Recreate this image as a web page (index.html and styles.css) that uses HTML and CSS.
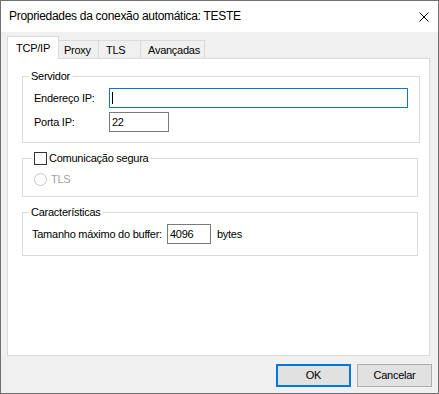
FILE: index.html
```html
<!DOCTYPE html>
<html lang="pt">
<head>
    <meta charset="UTF-8">
    <title>Propriedades da conexão automática: TESTE</title>
    <link rel="stylesheet" href="styles.css">
</head>
<body>
    <div class="window">
        <div class="titlebar">
            <span class="title">Propriedades da conexão automática: TESTE</span>
            <svg class="close" width="10" height="10" viewBox="0 0 10 10">
                <path d="M0.5 0.5 L9.5 9.5 M9.5 0.5 L0.5 9.5" stroke="#000" stroke-width="1" fill="none"/>
            </svg>
        </div>

        <div class="content">
            <div class="tabs">
                <div class="tab active tab-tcp">TCP/IP</div>
                <div class="tab tab-proxy">Proxy</div>
                <div class="tab tab-tls">TLS</div>
                <div class="tab tab-adv">Avançadas</div>
            </div>

            <div class="panel">
                <fieldset class="group group-server">
                    <legend>Servidor</legend>
                    <div class="form-grid">
                        <label>Endereço IP:</label>
                        <div class="textbox focused address"><span class="caret"></span></div>
                        <label>Porta IP:</label>
                        <input class="textbox port" value="22">
                    </div>
                </fieldset>

                <fieldset class="group group-secure">
                    <legend class="check-legend">
                        <input type="checkbox" class="checkbox" id="secure">
                        <label for="secure">Comunicação segura</label>
                    </legend>
                    <div class="radio-row">
                        <input type="radio" class="radio" id="tls" disabled>
                        <label for="tls">TLS</label>
                    </div>
                </fieldset>

                <fieldset class="group group-features">
                    <legend>Características</legend>
                    <div class="buffer-row">
                        <label>Tamanho máximo do buffer:</label>
                        <input class="textbox buffer" value="4096">
                        <span>bytes</span>
                    </div>
                </fieldset>
            </div>

            <div class="buttons">
                <button class="btn default">OK</button>
                <button class="btn">Cancelar</button>
            </div>
        </div>
    </div>
</body>
</html>
```

FILE: styles.css
```css
:root {
    --window-border: #707070;
    --face: #f0f0f0;
    --line: #dadada;
    --field-border: #7a7a7a;
    --accent: #0078d7;
    --disabled: #a0a0a0;
}

body {
    margin: 0;
    font-family: "Liberation Sans", Arial, sans-serif;
    font-size: 11px;
    line-height: 13px;
    letter-spacing: -0.25px;
    color: #000;
}

.window {
    width: 439px;
    height: 394px;
    box-sizing: border-box;
    border: 1px solid var(--window-border);
    background-color: var(--face);
    display: flex;
    flex-direction: column;
}

.titlebar {
    height: 31px;
    background-color: #fff;
    display: flex;
    align-items: center;
    padding-left: 8px;
}

.title {
    font-size: 12px;
    letter-spacing: -0.3px;
}

.close {
    margin-left: auto;
    margin-right: 9px;
}

.content {
    flex: 1;
    display: flex;
    flex-direction: column;
    padding: 4px 8px 6px 6px;
}

/* tabs */
.tabs {
    display: flex;
    align-items: flex-end;
}

.tab {
    position: relative;
    z-index: 1;
    margin-bottom: -1px;
    box-sizing: border-box;
    border: 1px solid var(--line);
    border-left: none;
    background-color: var(--face);
    padding: 3px 0 1px 6px;
}

.tab.active {
    border-left: 1px solid var(--line);
    border-bottom: none;
    background-color: #fff;
    padding: 5px 0 4px 0;
    text-align: center;
}

.tab-tcp { width: 52px; }
.tab-proxy { width: 40px; padding-left: 5px; }
.tab-tls { width: 42px; padding-left: 7px; }
.tab-adv { width: 64px; padding-left: 7px; }

.panel {
    height: 298px;
    box-sizing: border-box;
    border: 1px solid var(--line);
    background-color: #fff;
    padding-top: 11px;
}

/* group boxes */
.group {
    margin: 0 11px 0 14px;
    border: 1px solid #dcdcdc;
    padding: 5px 11px 10px 11px;
}

.group + .group {
    margin-top: 9px;
}

.group legend {
    padding: 0 2px;
    margin-left: -5px;
}

.group .check-legend {
    display: flex;
    align-items: center;
    margin-left: -2px;
}

.form-grid {
    display: grid;
    grid-template-columns: 75px 299px;
    row-gap: 4px;
    align-items: center;
}

.textbox {
    height: 20px;
    box-sizing: border-box;
    border: 1px solid var(--field-border);
    background-color: #fff;
    padding: 0 2px;
    margin: 0;
    font: inherit;
    letter-spacing: inherit;
    outline: none;
}

.textbox.focused {
    border-color: var(--accent);
    display: flex;
    align-items: center;
}

.caret {
    width: 1px;
    height: 12px;
    background-color: #000;
}

.port { width: 60px; }
.buffer { width: 44px; }

.checkbox {
    appearance: none;
    width: 13px;
    height: 13px;
    margin: 0 2px 0 0;
    border: 1px solid #333;
    background-color: #fff;
}

.group-secure {
    padding-top: 8px;
}

.radio-row {
    display: flex;
    align-items: center;
    color: var(--disabled);
}

.radio {
    appearance: none;
    width: 13px;
    height: 13px;
    margin: 0 4px 0 0;
    border: 1px solid #c6c6c6;
    border-radius: 50%;
    background-color: #fff;
}

.buffer-row {
    display: flex;
    align-items: center;
    margin-left: -2px;
    padding-bottom: 1px;
}

.buffer-row .buffer {
    margin: 0 6px 0 5px;
}

/* dialog buttons */
.buttons {
    margin-top: auto;
    display: flex;
    justify-content: flex-end;
    gap: 6px;
    margin-right: -2px;
}

.btn {
    width: 75px;
    height: 23px;
    box-sizing: border-box;
    border: 1px solid #adadad;
    background-color: #e1e1e1;
    font: inherit;
    letter-spacing: inherit;
    color: #000;
    padding: 0;
}

.btn.default {
    border: 2px solid var(--accent);
}
```
